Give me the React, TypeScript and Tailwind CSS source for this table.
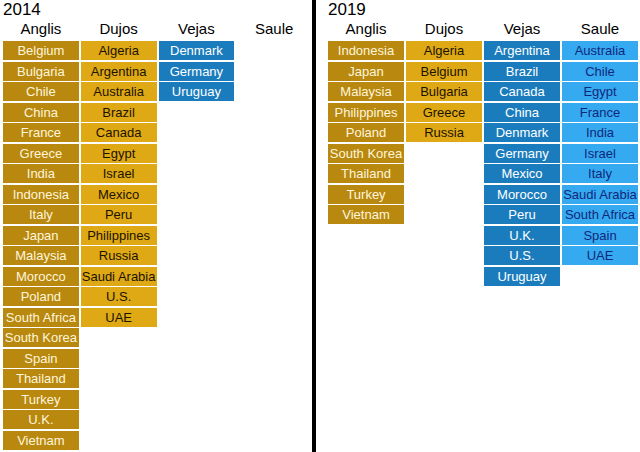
import React from 'react';

type Col = { name: string; items: string[] };

const styles: Record<string, string> = {
  Anglis: 'bg-[#b8880f] text-[#fff6dc]',
  Dujos: 'bg-[#dea914] text-[#1c1200]',
  Vejas: 'bg-[#1b7cbd] text-white',
  Saule: 'bg-[#35aaf1] text-[#10287a]',
};

const data2014: Col[] = [
  {
    name: 'Anglis',
    items: [
      'Belgium', 'Bulgaria', 'Chile', 'China', 'France', 'Greece', 'India', 'Indonesia', 'Italy', 'Japan',
      'Malaysia', 'Morocco', 'Poland', 'South Africa', 'South Korea', 'Spain', 'Thailand', 'Turkey', 'U.K.', 'Vietnam',
    ],
  },
  {
    name: 'Dujos',
    items: [
      'Algeria', 'Argentina', 'Australia', 'Brazil', 'Canada', 'Egypt', 'Israel', 'Mexico', 'Peru', 'Philippines',
      'Russia', 'Saudi Arabia', 'U.S.', 'UAE',
    ],
  },
  { name: 'Vejas', items: ['Denmark', 'Germany', 'Uruguay'] },
  { name: 'Saule', items: [] },
];

const data2019: Col[] = [
  {
    name: 'Anglis',
    items: ['Indonesia', 'Japan', 'Malaysia', 'Philippines', 'Poland', 'South Korea', 'Thailand', 'Turkey', 'Vietnam'],
  },
  { name: 'Dujos', items: ['Algeria', 'Belgium', 'Bulgaria', 'Greece', 'Russia'] },
  {
    name: 'Vejas',
    items: ['Argentina', 'Brazil', 'Canada', 'China', 'Denmark', 'Germany', 'Mexico', 'Morocco', 'Peru', 'U.K.', 'U.S.', 'Uruguay'],
  },
  {
    name: 'Saule',
    items: ['Australia', 'Chile', 'Egypt', 'France', 'India', 'Israel', 'Italy', 'Saudi Arabia', 'South Africa', 'Spain', 'UAE'],
  },
];

const Panel = ({ year, cols, className }: { year: string; cols: Col[]; className: string }) => (
  <div className={className}>
    <div className="h-[19px] text-[17px] leading-[19px] text-black">{year}</div>
    <div className="flex gap-[2px]">
      {cols.map((c) => (
        <div key={c.name} className="w-[76px] flex flex-col">
          <div className="h-[22px] text-center text-[15px] leading-[20px] text-black">{c.name}</div>
          <div className="flex flex-col gap-[1.5px]">
            {c.items.map((it) => (
              <div
                key={it}
                className={`h-[19px] text-center text-[13px] leading-[19px] whitespace-nowrap ${styles[c.name]}`}
              >
                {it}
              </div>
            ))}
          </div>
        </div>
      ))}
    </div>
  </div>
);

export default function App() {
  return (
    <div className="w-[640px] h-[452px] bg-white flex overflow-hidden font-['Liberation_Sans',Arial,sans-serif]">
      <Panel year="2014" cols={data2014} className="w-[312px] pl-[3px]" />
      <div className="w-[4px] h-full bg-black" />
      <Panel year="2019" cols={data2019} className="flex-1 pl-[12px]" />
    </div>
  );
}
